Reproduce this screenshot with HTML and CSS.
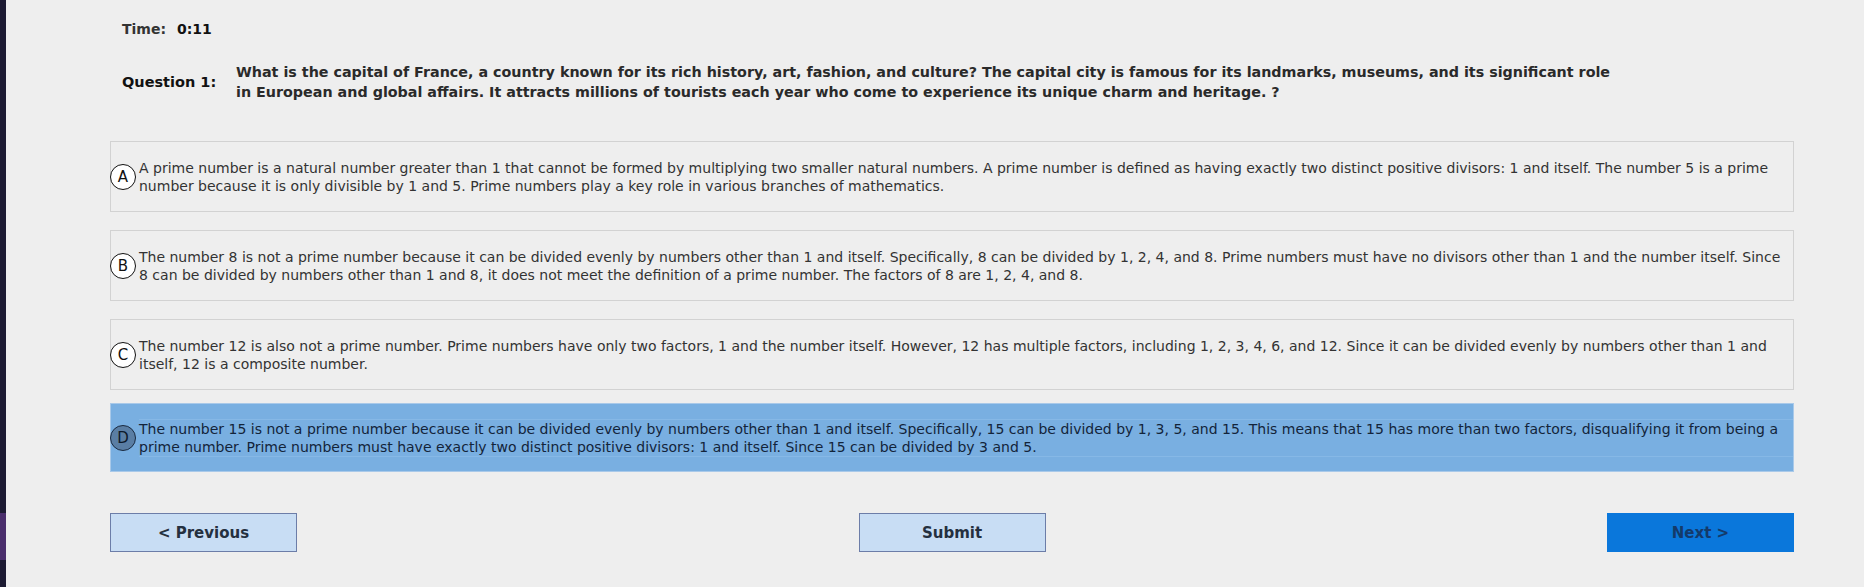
FILE: index.html
```html
<!DOCTYPE html>
<html>
<head>
<meta charset="utf-8">
<link rel="stylesheet" href="styles.css">
</head>
<body>
<div class="app">
  <div class="strip">
    <div class="strip-dark top"></div>
    <div class="strip-purple"></div>
    <div class="strip-dark"></div>
  </div>
  <main class="main">
    <div class="timer"><span class="timer-label">Time:</span><span class="timer-value">0:11</span></div>
    <div class="question">
      <div class="q-label">Question 1:</div>
      <div class="q-text">What is the capital of France, a country known for its rich history, art, fashion, and culture? The capital city is famous for its landmarks, museums, and its significant role<br>in European and global affairs. It attracts millions of tourists each year who come to experience its unique charm and heritage. ?</div>
    </div>
    <div class="options">
      <div class="option">
        <span class="bullet">A</span>
        <div class="opt-text">A prime number is a natural number greater than 1 that cannot be formed by multiplying two smaller natural numbers. A prime number is defined as having exactly two distinct positive divisors: 1 and itself. The number 5 is a prime<br>number because it is only divisible by 1 and 5. Prime numbers play a key role in various branches of mathematics.</div>
      </div>
      <div class="option">
        <span class="bullet">B</span>
        <div class="opt-text">The number 8 is not a prime number because it can be divided evenly by numbers other than 1 and itself. Specifically, 8 can be divided by 1, 2, 4, and 8. Prime numbers must have no divisors other than 1 and the number itself. Since<br>8 can be divided by numbers other than 1 and 8, it does not meet the definition of a prime number. The factors of 8 are 1, 2, 4, and 8.</div>
      </div>
      <div class="option">
        <span class="bullet">C</span>
        <div class="opt-text">The number 12 is also not a prime number. Prime numbers have only two factors, 1 and the number itself. However, 12 has multiple factors, including 1, 2, 3, 4, 6, and 12. Since it can be divided evenly by numbers other than 1 and<br>itself, 12 is a composite number.</div>
      </div>
      <div class="option selected">
        <span class="bullet">D</span>
        <div class="opt-text">The number 15 is not a prime number because it can be divided evenly by numbers other than 1 and itself. Specifically, 15 can be divided by 1, 3, 5, and 15. This means that 15 has more than two factors, disqualifying it from being a<br>prime number. Prime numbers must have exactly two distinct positive divisors: 1 and itself. Since 15 can be divided by 3 and 5.</div>
      </div>
    </div>
    <div class="nav">
      <button class="btn">&lt; Previous</button>
      <button class="btn">Submit</button>
      <button class="btn primary">Next &gt;</button>
    </div>
  </main>
</div>
</body>
</html>
```

FILE: styles.css
```css
html, body {
  margin: 0;
  padding: 0;
  background: #eeeeee;
}
body {
  font-family: "DejaVu Sans", Verdana, sans-serif;
  color: #333333;
  width: 1864px;
  height: 587px;
  overflow: hidden;
}
.app {
  display: flex;
  height: 587px;
}
.strip {
  width: 6px;
  display: flex;
  flex-direction: column;
  flex: none;
}
.strip-dark {
  background: #1c1a32;
  flex: 1;
}
.strip-dark.top {
  flex: none;
  height: 513px;
}
.strip-purple {
  height: 47px;
  background: #4a2e6c;
}
.main {
  flex: 1;
  padding: 0 0 0 104px;
  width: 1684px;
}
.timer {
  padding: 20px 0 0 12px;
  font-weight: bold;
  font-size: 14px;
  line-height: 18px;
  display: flex;
  gap: 11px;
}
.timer-label { color: #333; }
.timer-value { color: #111; }
.question {
  display: flex;
  align-items: center;
  padding: 24px 0 0 12px;
}
.q-label {
  font-weight: bold;
  font-size: 14.5px;
  color: #111;
  width: 114px;
  flex: none;
}
.q-text {
  font-family: "DejaVu Sans", sans-serif;
  font-weight: bold;
  font-size: 14.3px;
  line-height: 20px;
  color: #2a2a2a;
  white-space: nowrap;
}
.options {
  margin-top: 39px;
  display: flex;
  flex-direction: column;
  gap: 18px;
  width: 1684px;
}
.option {
  box-sizing: border-box;
  height: 71px;
  border: 1px solid #d2d2d2;
  display: flex;
  align-items: center;
  gap: 3px;
}
.option.selected {
  background: #79afe1;
  border-color: #a9c9e9;
  height: 69px;
  margin-top: -5px;
}
.bullet {
  box-sizing: border-box;
  width: 26px;
  height: 26px;
  margin-left: -1px;
  border: 1px solid #111;
  border-radius: 50%;
  background: #ffffff;
  color: #111;
  font-size: 15px;
  display: flex;
  align-items: center;
  justify-content: center;
  flex: none;
}
.selected .bullet {
  background: #5a7ea4;
  border-color: #1a2a40;
  color: #0e1a2a;
}
.opt-text {
  flex: 1;
  font-size: 14px;
  line-height: 18px;
  color: #333333;
  white-space: nowrap;
}
.selected .opt-text {
  color: #13243a;
  border-top: 1px solid #86b8e6;
  border-bottom: 1px solid #86b8e6;
}
.nav {
  margin-top: 41px;
  display: flex;
  justify-content: space-between;
  width: 1684px;
}
.btn {
  box-sizing: border-box;
  width: 187px;
  height: 39px;
  background: #c8ddf4;
  border: 1px solid #6c7da8;
  font-family: "DejaVu Sans", sans-serif;
  font-weight: bold;
  font-size: 15px;
  color: #25303f;
  padding: 0;
}
.btn.primary {
  background: #0a77db;
  border-color: #0a77db;
  color: #143a6a;
}
```
